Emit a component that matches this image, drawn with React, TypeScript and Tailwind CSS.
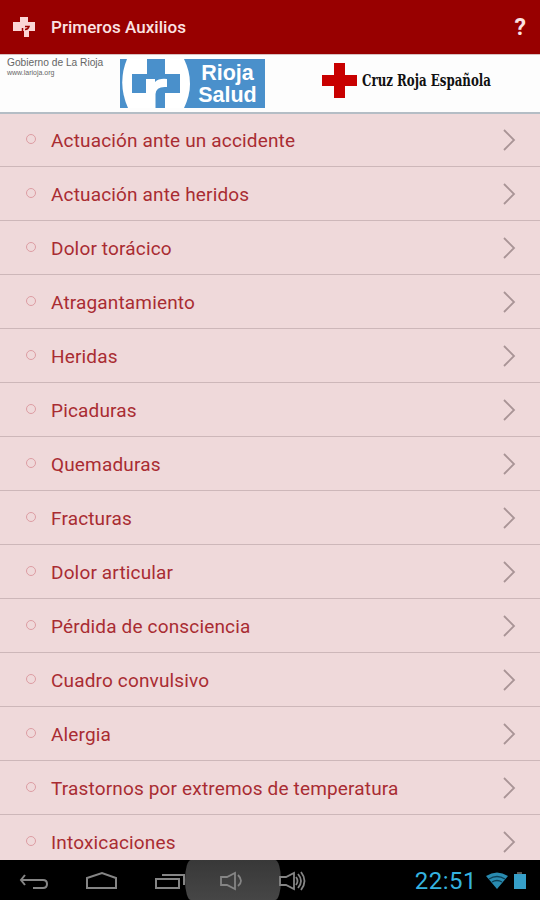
import React from 'react'

const topics = [
  'Actuación ante un accidente',
  'Actuación ante heridos',
  'Dolor torácico',
  'Atragantamiento',
  'Heridas',
  'Picaduras',
  'Quemaduras',
  'Fracturas',
  'Dolor articular',
  'Pérdida de consciencia',
  'Cuadro convulsivo',
  'Alergia',
  'Trastornos por extremos de temperatura',
  'Intoxicaciones',
]

function Header() {
  return (
    <header className="flex h-[54px] shrink-0 items-center bg-[#980000] pt-px pr-[14px] pl-[13px] text-[#fbe3e3]">
      <svg className="h-[22px] w-[22px] shrink-0" viewBox="0 0 22 22">
        <path d="M7 0h8v5h7v9h-6v6h-5v-6H0V5h7z" fill="#fbd6d6" />
        <path d="M9.500 15v-4M12 9.500h4q-1 3-4 3" fill="none" stroke="#980000" strokeWidth="1.5" />
      </svg>
      <h1 className="ml-4 text-[17px] font-medium tracking-[0.05px]">Primeros Auxilios</h1>
      <span className="ml-auto pt-px text-[23px] font-bold">?</span>
    </header>
  )
}

function RiojaSaludLogo() {
  return (
    <div className="flex h-[49px] w-[145px] bg-[#4a90cb]">
      <svg className="h-[49px] w-[72px] shrink-0" viewBox="0 0 72 49">
        <path d="M7 0h57q12 24.500 0 49H8Q-3 24.500 7 0z" fill="#fff" />
        <path d="M27 0h18v15h15v19H45v15H27V34H12V15h15z" fill="#4a90cb" />
        <path d="M26 20h9v3q4-4 12-3v8q-11-1-11.500 7v14H26z" fill="#fff" />
      </svg>
      <div className="flex flex-1 flex-col items-center pt-[3px] pr-[2px] text-[21.5px] leading-[22px] font-bold text-white">
        <span>Rioja</span>
        <span>Salud</span>
      </div>
    </div>
  )
}

function Sponsors() {
  return (
    <div className="flex h-[60px] shrink-0 items-start border-t border-b-2 border-t-[#d8c0c0] border-b-[#b4bdc5] bg-[#fdfdfd] font-['Liberation_Sans']">
      <div className="w-[120px] shrink-0 pt-[2px] pl-[7px] text-[#666]">
        <p className="text-[10.2px] leading-[12px] whitespace-nowrap">Gobierno de La Rioja</p>
        <p className="text-[7px] leading-[7px]">www.larioja.org</p>
      </div>
      <div className="shrink-0 pt-[4px]">
        <RiojaSaludLogo />
      </div>
      <svg className="mt-[8px] ml-[57px] h-[35px] w-[35px] shrink-0" viewBox="0 0 35 35">
        <path d="M12 0h11v12h12v11H23v12H12V23H0V12h12z" fill="#c80000" />
      </svg>
      <p className="mt-[13px] ml-[5px] origin-left scale-x-[0.695] font-['DejaVu_Serif'] text-[17px] leading-6 font-bold whitespace-nowrap text-[#111]">
        Cruz Roja Española
      </p>
    </div>
  )
}

function TopicRow({ title }: { title: string }) {
  return (
    <li className="flex h-[54px] shrink-0 items-center border-b border-[#cdb7b9] pr-[24px] pl-[26px]">
      <span className="mb-[2px] h-[10px] w-[10px] rounded-full border-[1.5px] border-[#dd9da3]" />
      <span className="ml-[15px] pt-[2px] text-[19px] leading-6 tracking-[0.16px] whitespace-nowrap text-[#a92c32]">
        {title}
      </span>
      <svg className="ml-auto h-[22px] w-[14px]" viewBox="0 0 14 22" fill="none" stroke="#a99496" strokeWidth="1.8">
        <path d="M2 1l10 10L2 21" />
      </svg>
    </li>
  )
}

function SystemBar() {
  return (
    <footer className="flex h-[40px] shrink-0 items-center bg-black">
      <svg className="h-[40px] w-[185px] shrink-0" viewBox="0 0 185 40" fill="none" stroke="#858585" strokeWidth="2">
        <path d="M25 15l-4 5 4 5M21 20h22q4 0 4 4t-4 4H33" />
        <path d="M87 28V18l15-5 14 5v10z" />
        <path d="M156 19h23v9h-23zM162 15h22v10" />
      </svg>
      <div className="h-[40px] w-[96px] shrink-0 rounded-[6px/20px] bg-gradient-to-b from-[#383838] to-[#464646]">
        <svg className="h-[40px] w-[96px]" viewBox="0 0 96 40" fill="none" stroke="#858585" strokeWidth="1.8">
          <path d="M36 17h6l8-4v16l-8-4h-6zM53 15q6 6 0 11" />
        </svg>
      </div>
      <svg className="-ml-[2px] h-[40px] w-[30px] shrink-0" viewBox="0 0 30 40" fill="none" stroke="#858585" strokeWidth="1.8">
        <path d="M1 17h6l8-4v16l-8-4H1zM17 17q3 4 0 8M19 14q6 7 0 14M22 12q7 9 0 18" />
      </svg>
      <span className="ml-auto pt-[2px] text-[24px] tracking-[0.5px] text-[#35b2df]">22:51</span>
      <svg className="mr-[13px] ml-[8px] h-[40px] w-[42px] shrink-0" viewBox="0 0 42 40">
        <path d="M1 16q11-7 22 0L12 29z" fill="#298bb0" />
        <path d="M4 19q8-5 16 0M7 22q5-3 10 0" fill="none" stroke="#0c3f55" strokeWidth="1.3" />
        <path d="M32 12h5v2h-5z" fill="#555" />
        <path d="M29 14h12v15H29z" fill="#369fc8" />
      </svg>
    </footer>
  )
}

export default function App() {
  return (
    <div className="flex h-[900px] w-[540px] flex-col overflow-hidden bg-[#efd9da] font-['Roboto',sans-serif]">
      <Header />
      <Sponsors />
      <ul className="-mt-px flex min-h-0 flex-1 flex-col overflow-hidden">
        {topics.map((title) => (
          <TopicRow key={title} title={title} />
        ))}
      </ul>
      <SystemBar />
    </div>
  )
}
